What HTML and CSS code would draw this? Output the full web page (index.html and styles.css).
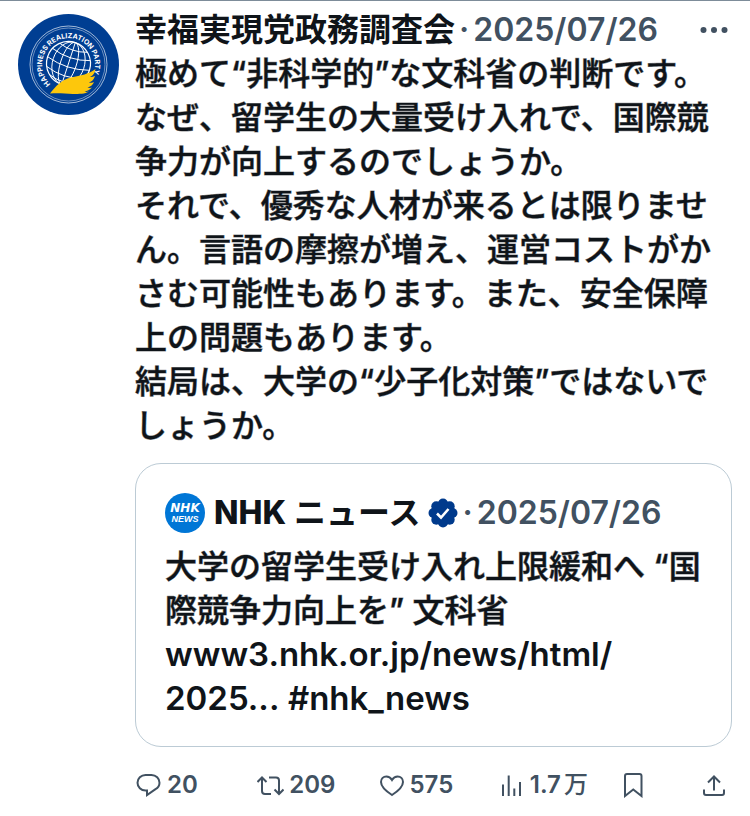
FILE: index.html
```html
<!DOCTYPE html>
<html lang="ja">
<head>
    <meta charset="UTF-8">
    <meta name="viewport" content="width=device-width, initial-scale=1">
    <title>幸福実現党政務調査会</title>
    <link rel="stylesheet" href="styles.css">
</head>
<body>
<article class="post">
    <a class="avatar" href="#" aria-label="幸福実現党政務調査会">
        <svg viewBox="0 0 101 101">
            <defs>
                <path id="ring" d="M32.5 70A26.5 26.5 0 1 1 66.8 71.6"/>
            </defs>
            <circle cx="50.5" cy="50.5" r="50.5" fill="#003e92"/>
            <g fill="none" stroke="#fff">
                <circle cx="50.5" cy="50.5" r="38.5" stroke-width=".8" opacity=".8"/>
                <circle cx="50.5" cy="50.5" r="36.5" stroke-width=".6" opacity=".7"/>
                <g stroke-width=".9" transform="rotate(18 50.5 49.5)">
                    <circle cx="50.5" cy="49.5" r="22" stroke-width="1.2"/>
                    <ellipse cx="50.5" cy="49.5" rx="16" ry="22"/>
                    <ellipse cx="50.5" cy="49.5" rx="8" ry="22"/>
                    <path d="M50.5 27.5v44M28.5 49.5q22 7 44 0M30.5 40q20 7 40 0M36 33q14.5 5 29 0M30.5 59q20 7 40 0M36 66q14.5 5 29 0"/>
                </g>
            </g>
            <text class="ring-text"><textPath href="#ring">HAPPINESS REALIZATION PARTY</textPath></text>
            <path fill="#fdc70c" d="M32 79.5C38 72 43 66 53 63.5C63 61.5 71 60 77.5 55C77 59 75 61.5 72 63C74 63 76 62.5 77 62C76 65.5 74 67.5 71 68.5C73 69 75 68.5 76 68C75 71 72 73 69.5 73.5C71 74 73 74 74 73.5C72 76 69 77 66.5 77.5C68 78 69 78 71 77.5C67 80 61 80 55 80C47 79.5 40 79 32 79.5z"/>
        </svg>
    </a>
    <div class="content">
        <header class="head">
            <a class="name" href="#">幸福実現党政務調査会</a>
            <span class="dot">·</span>
            <time class="date" datetime="2025-07-26">2025/07/26</time>
            <button class="more" type="button" aria-label="もっと見る">
                <svg viewBox="0 0 28 10" width="28" height="10" fill="currentColor">
                    <circle cx="3.5" cy="5" r="3"/>
                    <circle cx="14" cy="5" r="3"/>
                    <circle cx="24.5" cy="5" r="3"/>
                </svg>
            </button>
        </header>
        <p class="text">極めて“非科学的”な文科省の判断です。<br>なぜ、留学生の大量受け入れで、国際競争力が向上するのでしょうか。<br>それで、優秀な人材が来るとは限りません。言語の摩擦が増え、運営コストがかさむ可能性もあります。また、安全保障上の問題もあります。<br>結局は、大学の“少子化対策”ではないでしょうか。</p>

        <section class="quote">
            <header class="quote-head">
                <svg class="nhk" viewBox="0 0 40 40">
                    <circle cx="20" cy="20" r="20" fill="#0076d6"/>
                    <text class="nhk-top" x="20" y="19">NHK</text>
                    <text class="nhk-bottom" x="20" y="29">NEWS</text>
                </svg>
                <a class="name" href="#"><span class="latin">NHK</span>ニュース</a>
                <svg class="badge" viewBox="-15 -15 30 30">
                    <g fill="#003a8c">
                        <circle r="12"/>
                        <circle cy="-9.5" r="5"/>
                        <circle cx="6.7" cy="-6.7" r="5"/>
                        <circle cx="9.5" r="5"/>
                        <circle cx="6.7" cy="6.7" r="5"/>
                        <circle cy="9.5" r="5"/>
                        <circle cx="-6.7" cy="6.7" r="5"/>
                        <circle cx="-9.5" r="5"/>
                        <circle cx="-6.7" cy="-6.7" r="5"/>
                    </g>
                    <path d="M-6 0.5L-2 4.5L5.5 -4" fill="none" stroke="#fff" stroke-width="2.6"/>
                </svg>
                <span class="dot">·</span>
                <time class="date" datetime="2025-07-26">2025/07/26</time>
            </header>
            <p class="text">大学の留学生受け入れ上限緩和へ “国際競争力向上を” 文科省<br><a href="#">www3.nhk.or.jp/news/html/<wbr>2025...</a> <a href="#">#nhk_news</a></p>
        </section>

        <footer class="actions">
            <button type="button" aria-label="返信">
                <svg viewBox="0 0 27 24" width="27" height="24">
                    <path d="M10.5 2H16.5C21 2 24.5 5.4 24.5 9.7C24.5 12.5 23 14.8 20.5 16.2L12 22V17.5H10.5C6 17.5 2.5 14 2.5 9.7C2.5 5.4 6 2 10.5 2z"/>
                </svg>
                <span>20</span>
            </button>
            <button type="button" aria-label="リポスト">
                <svg viewBox="1 0 27 24" width="27" height="24">
                    <path d="M1.5 9L6 4.5L10.5 9M6 5V18Q6 21 9 21H15M13 4.5H20Q23 4.5 23 7.5V20.5M18.5 16.5L23 21L27.5 16.5"/>
                </svg>
                <span>209</span>
            </button>
            <button type="button" aria-label="いいね">
                <svg viewBox="1 0 25 24" width="25" height="24">
                    <path d="M13 22C6 17.5 2 13.5 2 9C2 5.5 4.5 3.5 7.3 3.5C9.8 3.5 11.7 4.8 13 7C14.3 4.8 16.2 3.5 18.7 3.5C21.5 3.5 24 5.5 24 9C24 13.5 20 17.5 13 22z"/>
                </svg>
                <span>575</span>
            </button>
            <button type="button" aria-label="表示">
                <svg viewBox="2 0 23 24" width="23" height="24">
                    <path d="M3 11.5V23M8.7 2.5V23M14.3 15.5V23M20 9V23"/>
                </svg>
                <span>1.7<span class="unit">万</span></span>
            </button>
            <div class="save">
                <button type="button" aria-label="ブックマーク">
                    <svg viewBox="1 0 20 26" width="20" height="26">
                        <path d="M2 24V4Q2 2 4 2H16.5Q18.5 2 18.5 4V24L10.25 17.5z"/>
                    </svg>
                </button>
                <button type="button" aria-label="共有">
                    <svg viewBox="0 0 22 24" width="22" height="24">
                        <path d="M11 17.5V3.5M5 9.5L11 3.5L17 9.5M1 16.5V20Q1 22 3 22H19Q21 22 21 20V16.5"/>
                    </svg>
                </button>
            </div>
        </footer>
    </div>
</article>
</body>
</html>
```

FILE: styles.css
```css
* {
    box-sizing: border-box;
}
body {
    margin: 0;
    background-color: #fff;
    color: #0f1419;
    font-family: Inter, "Noto Sans CJK JP", sans-serif;
    font-size: 32px;
    font-weight: 500;
    line-height: 44px;
}
a {
    color: inherit;
    text-decoration: none;
}
button {
    display: flex;
    align-items: center;
    padding: 0;
    border: none;
    background: none;
    color: inherit;
    font: inherit;
    cursor: pointer;
}
svg {
    display: block;
    flex: none;
}
.post {
    display: flex;
    align-items: flex-start;
    gap: 16px;
    padding: 7px 18px 0;
    border-top: 1px solid #7d8c99;
}
.avatar {
    flex: none;
    width: 101px;
    margin-top: 6px;
}
.ring-text {
    fill: #fff;
    font-family: Inter, sans-serif;
    font-size: 7px;
    font-weight: 700;
}
.content {
    flex: 1;
    min-width: 0;
}
.head,
.quote-head {
    display: flex;
    align-items: center;
    height: 44px;
    white-space: nowrap;
}
.name {
    font-weight: 700;
}
.latin {
    margin-right: 8px;
    font-weight: 800;
}
.dot,
.date {
    color: #415161;
    font-weight: 600;
}
.dot {
    margin: 0 4px;
}
.more {
    margin-left: auto;
    padding-right: 4px;
    color: #415161;
}
.text {
    margin: 0;
    overflow-wrap: break-word;
    -webkit-text-stroke: 1px rgba(15, 20, 25, 0.5);
}
.text a {
    font-size: 33px;
    font-weight: 600;
    line-height: 40px;
    -webkit-text-stroke: 0;
}
.quote {
    margin-top: 15px;
    padding: 27px 24px 25px 29px;
    border: 1px solid #bccbd5;
    border-radius: 26px;
}
.quote-head {
    margin-bottom: 10px;
}
.nhk {
    width: 40px;
    height: 40px;
    margin-right: 9px;
}
.nhk text {
    fill: #fff;
    font-weight: 700;
    font-style: italic;
    text-anchor: middle;
}
.nhk .nhk-top {
    font-family: "DejaVu Sans", sans-serif;
    font-size: 12px;
}
.nhk .nhk-bottom {
    font-family: "Liberation Sans", sans-serif;
    font-size: 9px;
}
.badge {
    width: 30px;
    height: 30px;
    margin-left: 8px;
}
.actions {
    display: grid;
    grid-template-columns: repeat(4, 1fr) 108px;
    align-items: center;
    margin-top: 16px;
    color: #415161;
    font-size: 24px;
    font-weight: 600;
}
.actions button {
    gap: 5px;
}
.actions svg {
    fill: none;
    stroke: currentColor;
    stroke-width: 2;
}
.unit {
    margin-left: 3px;
    font-weight: 500;
}
.save {
    display: flex;
    justify-content: space-between;
    padding-right: 7px;
}
```
